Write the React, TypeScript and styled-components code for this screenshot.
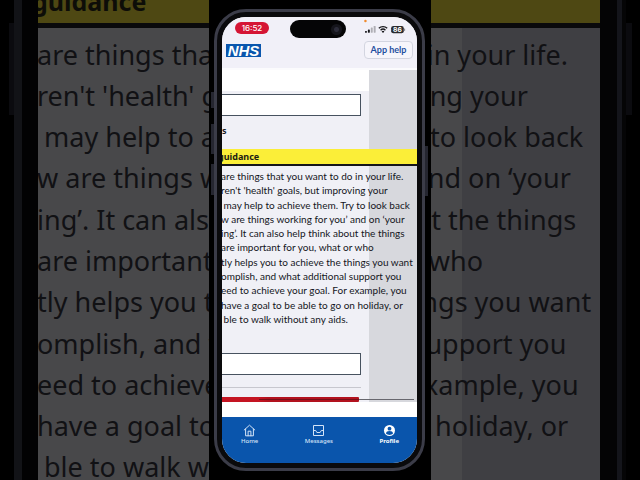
import React from "react";
import styled, { createGlobalStyle } from "styled-components";

const GlobalStyle = createGlobalStyle`
  * { box-sizing: border-box; }
  body { margin: 0; background: #000; }
  button, input { font: inherit; }
`;

const wide = '"Noto Sans", "Open Sans", sans-serif';
const small = 'Lato, "Noto Sans", sans-serif';

const Stage = styled.div`
  display: grid;
  grid-template-columns: minmax(0, 1fr);
  height: 100vh;
  overflow: hidden;
  background: #000;
  font-family: ${wide};
  & > * { grid-area: 1 / 1; }
`;

/* Enlarged, dimmed copy behind the phone */
const Backdrop = styled.div`
  display: grid;
  grid-template-columns: 5px 8px 16px minmax(0, 1fr) 17px 5px 4px 6px;
  width: 100%;
  max-width: 640px;
  padding: 0 8px 0 9px;
  margin: 0 auto;
  height: 100vh;
  overflow: hidden;
  background: #000;
`;
const BackKey = styled.div`
  height: 92px;
  margin-top: 23px;
  background: #0b0b0f;
`;
const BackRail = styled.div<{ $color: string }>`
  background: ${(p) => p.$color};
`;
const BackScreen = styled.div`
  overflow: hidden;
  background: linear-gradient(to left, #3f3f43 138px, #48484a 138px);
`;

const Banner = styled.h2<{ $big?: boolean }>`
  margin: 0;
  white-space: nowrap;
  color: ${(p) => (p.$big ? "#0d0d08" : "#1c1d14")};
  background: ${(p) => (p.$big ? "#4e4813" : "#fbee38")};
  border-bottom: ${(p) => (p.$big ? "5px solid #09090b" : "2px solid #14151a")};
  font-size: ${(p) => (p.$big ? 25 : 9)}px;
  line-height: ${(p) => (p.$big ? 44 : 15)}px;
  text-indent: ${(p) => (p.$big ? -6 : -4)}px;
  height: ${(p) => (p.$big ? 28 : 17)}px;
  display: flex;
  align-items: flex-end;
`;
const Lines = styled.div<{ $big?: boolean }>`
  display: grid;
  grid-auto-rows: 1fr;
  align-items: center;
  height: ${(p) => (p.$big ? 454 : 157)}px;
  margin-top: ${(p) => (p.$big ? 6 : 3)}px;
  margin-left: -1px;
  font-family: ${(p) => (p.$big ? wide : small)};
  font-size: ${(p) => (p.$big ? 27 : 10)}px;
  line-height: ${(p) => (p.$big ? 40 : 14)}px;
  color: ${(p) => (p.$big ? "#111114" : "#14161c")};
  white-space: nowrap;
`;

const Center = styled.div`
  justify-self: center;
  width: 222px;
  min-height: 100vh;
  background: #000;
  display: grid;
  grid-template-columns: 3px 211px 3px;
  align-items: start;
  padding: 9px 0 0 2px;
`;
const Keys = styled.div<{ $right?: boolean }>`
  display: flex;
  flex-direction: column;
  padding-top: ${(p) => (p.$right ? 137 : 83)}px;
`;
const Key = styled.div<{ $h: number; $gap?: number }>`
  height: ${(p) => p.$h}px;
  margin-bottom: ${(p) => p.$gap ?? 0}px;
  background: #252630;
`;
const Phone = styled.div`
  border: 3px solid #3b3c48;
  border-radius: 32px;
  padding: 5px;
  background: #0a0a0c;
  height: 462px;
`;
const Screen = styled.main`
  display: flex;
  flex-direction: column;
  height: 100%;
  border-radius: 24px;
  overflow: hidden;
  background: #fff;
`;
const Top = styled.header`
  background: #f1f0f8;
  height: 51px;
  flex: none;
`;
const Status = styled.div`
  display: flex;
  align-items: center;
  height: 24px;
  padding: 0 10px 3px 13px;
`;
const Clock = styled.div`
  width: 35px;
  height: 12px;
  border-radius: 6px;
  background: #d51534;
  color: #fff;
  font: 500 8px/12px Inter, sans-serif;
  text-align: center;
`;
const Island = styled.div`
  width: 58px;
  height: 18px;
  margin: 3px 18px 0 21px;
  border-radius: 9px;
  background: #050506;
  display: flex;
  align-items: center;
  justify-content: flex-end;
  padding-right: 4px;
`;
const Lens = styled.div`
  width: 11px;
  height: 11px;
  border-radius: 50%;
  background: radial-gradient(circle, #2b2b38 0 2px, #15151b 3px);
`;
const Bar = styled.div`
  display: flex;
  align-items: center;
  justify-content: space-between;
  padding: 0 4px;
`;
const Logo = styled.div`
  width: 35px;
  height: 13px;
  background: #0a56ad;
  color: #fff;
  font: italic 700 15px/13px "Liberation Sans", sans-serif;
  text-align: center;
`;
const Help = styled.button`
  width: 49px;
  height: 18px;
  padding: 0;
  border: 1px solid #d3d5e0;
  border-radius: 4px;
  background: #f6f5fb;
  color: #1f4f9f;
  font-family: ${small};
  font-weight: 700;
  font-size: 9px;
  line-height: 14px;
  white-space: nowrap;
`;
const Content = styled.section`
  flex: none;
  background: linear-gradient(to left, #d7d8dd 48px, #f0f0f6 48px);
  border-top: 2px solid #fbfbfd;
`;
const Blank = styled.div`
  height: 21px;
  margin-right: 48px;
  background: #fff;
`;
const Field = styled.input`
  display: block;
  width: calc(100% - 56px);
  height: 22px;
  padding: 0 4px;
  border: 1px solid #47525f;
  border-left: 0;
  border-radius: 0;
  background: #fff;
  font-size: 9px;
`;
const Entry = styled.div`
  padding-top: 3px;
`;
const Heading = styled.h3`
  margin: 7px 0 10px;
  font-size: 9px;
  line-height: 16px;
  color: #1d1f26;
`;
const Foot = styled.div`
  padding-top: 27px;
`;
const Rule = styled.hr`
  margin: 12px 56px 9px 0;
  border: 0;
  height: 1px;
  background: #c7c7ce;
`;
const RedRow = styled.div`
  display: flex;
  align-items: center;
  height: 5px;
`;
const Red = styled.div`
  width: 137px;
  height: 5px;
  border-radius: 0 1px 1px 0;
  background: linear-gradient(to right, #c41422 38px, #b2121e 46px);
  display: flex;
  align-items: center;
  justify-content: flex-end;
`;
const Scroll = styled.div<{ $w: number; $dark?: boolean }>`
  width: ${(p) => p.$w}px;
  height: 1px;
  background: ${(p) => (p.$dark ? "#761018" : "#67676e")};
`;
const Nav = styled.nav`
  margin-top: auto;
  height: 46px;
  flex: none;
  display: flex;
  justify-content: space-between;
  padding: 7px 18px 0 19px;
  background: #0a55ac;
`;
const Tab = styled.a<{ $on?: boolean }>`
  display: flex;
  flex-direction: column;
  align-items: center;
  color: ${(p) => (p.$on ? "#fff" : "#d3e3f7")};
  text-decoration: none;
  font-size: 6px;
  line-height: 9px;
  font-weight: ${(p) => (p.$on ? 700 : 500)};
  svg { display: block; }
`;

const guidance = [
  "are things that you want to do in your life.",
  "ren't 'health' goals, but improving your",
  "\u00a0may help to achieve them. Try to look back",
  "w are things working for you’ and on ‘your",
  "ing’. It can also help think about the things",
  "are important for you, what or who",
  "tly helps you to achieve the things you want",
  "omplish, and what additional support you",
  "eed to achieve your goal. For example, you",
  "have a goal to be able to go on holiday, or",
  "\u00a0ble to walk without any aids.",
];

function Guidance({ big }: { big?: boolean }) {
  return (
    <>
      <Banner $big={big}>guidance</Banner>
      <Lines $big={big}>
        {guidance.map((line) => (
          <div key={line}>{line}</div>
        ))}
      </Lines>
    </>
  );
}

function StatusIcons() {
  return (
    <svg width="44" height="20" viewBox="0 0 44 20" aria-hidden="true">
      <circle cx="1.5" cy="2.8" r="1.3" fill="#f08a2c" />
      <g fill="#16161a">
        <rect x="1" y="13" width="2" height="2" rx=".5" />
        <rect x="4" y="11.5" width="2" height="3.5" rx=".5" />
        <rect x="7" y="9.5" width="2" height="5.5" rx=".5" opacity=".3" />
        <rect x="10" y="8" width="2" height="7" rx=".5" opacity=".3" />
      </g>
      <g fill="none" stroke="#16161a" strokeWidth="1.4">
        <path d="M15.3 10.3a6.3 6.3 0 0 1 8.6 0" />
        <path d="M17.1 12.3a3.6 3.6 0 0 1 5 0" />
      </g>
      <path d="M18.2 13.5a2 2 0 0 1 2.8 0l-1.4 1.6z" fill="#16161a" />
      <rect x="28" y="8" width="13" height="7.5" rx="2.2" fill="#2a2a2e" />
      <rect x="41.4" y="10.4" width="1" height="2.6" rx=".5" fill="#77777d" />
      <text x="34.5" y="14.2" textAnchor="middle" fontFamily="Inter, sans-serif" fontWeight="700" fontSize="7" fill="#fff">86</text>
    </svg>
  );
}

const HomeIcon = () => (
  <svg width="13" height="13" viewBox="0 0 13 13" fill="none" stroke="currentColor" strokeWidth="1" strokeLinejoin="round" strokeLinecap="round" aria-hidden="true">
    <path d="M1.2 6 6.5 1.2 11.8 6M2.6 5v6.8h7.8V5M5.1 11.8V7.2h2.8v4.6" />
  </svg>
);
const InboxIcon = () => (
  <svg width="13" height="13" viewBox="0 0 13 13" fill="none" stroke="currentColor" strokeWidth="1" strokeLinejoin="round" aria-hidden="true">
    <path d="M1.5 1.5h10v10h-10zM1.5 6.5h2.2l1.2 2h3.2l1.2-2h2.2" />
  </svg>
);
const ProfileIcon = () => (
  <svg width="13" height="13" viewBox="0 0 13 13" aria-hidden="true">
    <circle cx="6.5" cy="6.5" r="5.5" fill="#fff" />
    <circle cx="6.5" cy="4.7" r="1.9" fill="#0a55ac" />
    <path d="M3 9.6c0-2 1.5-2.7 3.5-2.7s3.5.7 3.5 2.7c-1 1-2.2 1.4-3.5 1.4S4 10.6 3 9.6z" fill="#0a55ac" />
  </svg>
);

export default function App() {
  return (
    <>
      <GlobalStyle />
      <Stage>
        <Backdrop aria-hidden="true">
          <BackKey />
          <BackRail $color="#121317" />
          <BackRail $color="#020203" />
          <BackScreen>
            <Guidance big />
          </BackScreen>
          <BackRail $color="#040405" />
          <BackRail $color="#14151b" />
          <BackRail $color="#050506" />
          <BackKey />
        </Backdrop>
        <Center>
          <Keys>
            <Key $h={16} $gap={16} />
            <Key $h={30} $gap={10} />
            <Key $h={31} />
          </Keys>
          <Phone>
            <Screen>
              <Top>
                <Status>
                  <Clock>16:52</Clock>
                  <Island>
                    <Lens />
                  </Island>
                  <StatusIcons />
                </Status>
                <Bar>
                  <Logo>NHS</Logo>
                  <Help>App help</Help>
                </Bar>
              </Top>
              <Content>
                <Blank />
                <Entry>
                  <Field aria-label="Goal" />
                </Entry>
                <Heading>s</Heading>
                <Guidance />
                <Foot>
                  <Field aria-label="Details" />
                  <Rule />
                  <RedRow>
                    <Red>
                      <Scroll $w={100} $dark />
                    </Red>
                    <Scroll $w={55} />
                  </RedRow>
                </Foot>
              </Content>
              <Nav>
                <Tab href="#home">
                  <HomeIcon />
                  Home
                </Tab>
                <Tab href="#messages">
                  <InboxIcon />
                  Messages
                </Tab>
                <Tab href="#profile" $on>
                  <ProfileIcon />
                  Profile
                </Tab>
              </Nav>
            </Screen>
          </Phone>
          <Keys $right>
            <Key $h={50} />
          </Keys>
        </Center>
      </Stage>
    </>
  );
}
